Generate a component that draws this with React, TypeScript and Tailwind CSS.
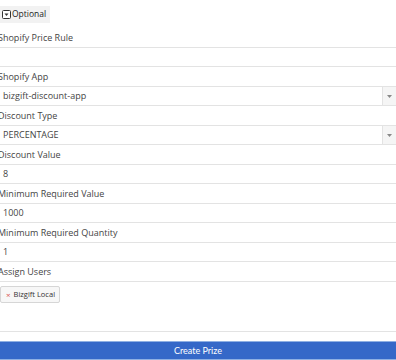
import { useState } from "react";

type Field = {
  label: string;
  kind: "input" | "select";
  value: string;
};

const fields: Field[] = [
  { label: "Shopify Price Rule", kind: "input", value: "" },
  { label: "Shopify App", kind: "select", value: "bizgift-discount-app" },
  { label: "Discount Type", kind: "select", value: "PERCENTAGE" },
  { label: "Discount Value", kind: "input", value: "8" },
  { label: "Minimum Required Value", kind: "input", value: "1000" },
  { label: "Minimum Required Quantity", kind: "input", value: "1" },
];

function CaretBoxIcon() {
  return (
    <svg width="9" height="9" viewBox="0 0 9 9" className="shrink-0">
      <rect x="0.5" y="0.5" width="8" height="8" rx="1" fill="#fff" stroke="#333" />
      <path d="M2.5 3.5h4L4.5 6z" fill="#333" />
    </svg>
  );
}

export default function App() {
  const [users, setUsers] = useState(["Bizgift Local"]);

  return (
    <div className="h-[360px] w-[396px] overflow-hidden bg-white font-['Open_Sans',sans-serif] text-[9px] text-[#444]">
      <div className="-ml-[2px] flex w-[398px] flex-col">
        <div className="flex h-[28px] items-start pt-[6px] pl-[2px]">
          <button
            type="button"
            className="flex h-[17px] items-center gap-[1px] bg-[#f2f2f2] pr-[4px] pl-[2px] text-[8.5px] text-[#222]"
          >
            <CaretBoxIcon />
            Optional
          </button>
        </div>

        {fields.map((field) => (
          <div key={field.label} className="flex flex-col">
            <label className="flex h-[19px] items-center">{field.label}</label>
            <div className="flex h-[20px] items-stretch border-y border-[#e3e3e3] bg-white">
              <span className="flex flex-1 items-center pl-[5px]">{field.value}</span>
              {field.kind === "select" && (
                <span className="flex w-[14px] items-center justify-center border-l border-[#e3e3e3] bg-[#f5f5f5]">
                  <svg width="5" height="3" viewBox="0 0 5 3">
                    <path d="M0 0h5L2.5 3z" fill="#888" />
                  </svg>
                </span>
              )}
            </div>
          </div>
        ))}

        <label className="flex h-[19px] items-center">Assign Users</label>
        <div className="flex h-[51px] items-start gap-1 border-y border-[#e3e3e3] pt-[4px] pl-[2px]">
          {users.map((user) => (
            <span
              key={user}
              className="flex h-[17px] items-center gap-[3px] rounded-[2px] border border-[#d6d6d6] bg-[#f7f7f7] pr-[4px] pl-[5px] text-[7.5px] text-[#333]"
            >
              <button
                type="button"
                onClick={() => setUsers(users.filter((u) => u !== user))}
                className="text-[8px] leading-none text-[#d9534f]"
              >
                ×
              </button>
              {user}
            </span>
          ))}
        </div>

        <div className="h-[9px]" />
        <button
          type="button"
          className="flex h-[19px] items-center justify-center border-y border-[#8fb0e3] bg-[#3568c8] pl-[2px] font-['Lato',sans-serif] text-[9px] text-white"
        >
          Create Prize
        </button>
      </div>
    </div>
  );
}
